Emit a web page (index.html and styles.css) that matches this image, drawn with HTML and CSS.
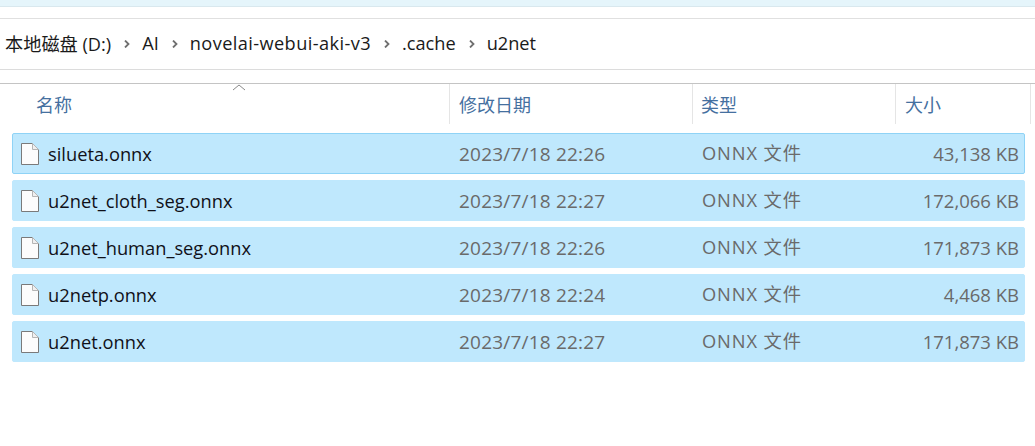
FILE: index.html
```html
<!DOCTYPE html>
<html lang="zh-CN">
<head>
<meta charset="utf-8">
<title>u2net</title>
<link rel="stylesheet" href="styles.css">
</head>
<body>
<svg class="defs" width="0" height="0" aria-hidden="true">
  <symbol id="file" viewBox="0 0 18 22">
    <path d="M0.5 0.5H11.5L17.5 6.5V21.5H0.5Z" fill="#fcfcfc" stroke="#7a7a7a"/>
    <path d="M11.5 0.5V6.5H17.5Z" fill="#f0f0f0" stroke="#b5b5b5"/>
  </symbol>
  <symbol id="chev" viewBox="0 0 6 8">
    <path d="M1 0.5L4.5 4L1 7.5" fill="none" stroke="#6f6f6f" stroke-width="1.8"/>
  </symbol>
</svg>
<div class="strip"></div>
<nav class="crumbs">
  <span>本地磁盘 (D:)</span><svg class="chev"><use href="#chev"/></svg>
  <span>AI</span><svg class="chev"><use href="#chev"/></svg>
  <span class="wide">novelai-webui-aki-v3</span><svg class="chev"><use href="#chev"/></svg>
  <span>.cache</span><svg class="chev"><use href="#chev"/></svg>
  <span>u2net</span>
</nav>
<div class="gap"></div>
<header class="head">
  <div class="col col-name">名称<svg class="sort" viewBox="0 0 14 7"><path d="M1 6L7 1L13 6" fill="none" stroke="#8a8a8a"/></svg></div>
  <div class="col col-date">修改日期</div>
  <div class="col col-type">类型</div>
  <div class="col col-size">大小</div>
</header>
<main class="list">
  <div class="row focus"><svg class="file"><use href="#file"/></svg><span class="name">silueta.onnx</span><span class="date">2023/7/18 22:26</span><span class="type">ONNX 文件</span><span class="size">43,138 KB</span></div>
  <div class="row"><svg class="file"><use href="#file"/></svg><span class="name">u2net_cloth_seg.onnx</span><span class="date">2023/7/18 22:27</span><span class="type">ONNX 文件</span><span class="size">172,066 KB</span></div>
  <div class="row"><svg class="file"><use href="#file"/></svg><span class="name">u2net_human_seg.onnx</span><span class="date">2023/7/18 22:26</span><span class="type">ONNX 文件</span><span class="size">171,873 KB</span></div>
  <div class="row"><svg class="file"><use href="#file"/></svg><span class="name">u2netp.onnx</span><span class="date">2023/7/18 22:24</span><span class="type">ONNX 文件</span><span class="size">4,468 KB</span></div>
  <div class="row"><svg class="file"><use href="#file"/></svg><span class="name">u2net.onnx</span><span class="date">2023/7/18 22:27</span><span class="type">ONNX 文件</span><span class="size">171,873 KB</span></div>
</main>
</body>
</html>
```

FILE: styles.css
```css
* { box-sizing: border-box; }
html, body { margin: 0; padding: 0; }
body {
  width: 1035px;
  height: 446px;
  overflow: hidden;
  background: #fff;
  font-family: "Open Sans", "Noto Sans CJK SC", sans-serif;
  font-size: 18px;
  color: #1a1a1a;
}
.defs { position: absolute; }
.strip {
  height: 7px;
  margin-bottom: 11px;
  background: #e5f5fb;
  border-bottom: 1px solid #d9e8ee;
}
.crumbs {
  height: 52px;
  display: flex;
  align-items: center;
  padding: 0 0 3px 5px;
  border-top: 1px solid #e0e0e0;
  border-bottom: 1px solid #dcdcdc;
  white-space: nowrap;
  font-size: 18.2px;
}
.wide { letter-spacing: 0.4px; }
.chev { width: 6px; height: 8px; margin: 3px 12px 0 13px; }
.gap { height: 13px; }
.head {
  height: 41px;
  display: flex;
  border-top: 1px solid #c4c4c4;
  color: #45709f;
  font-size: 18px;
}
.col {
  position: relative;
  padding-top: 9px;
  border-right: 1px solid #e5e5e5;
  line-height: 24px;
}
.col-name { width: 450px; padding-left: 36px; }
.col-date { width: 243px; padding-left: 9px; }
.col-type { width: 203px; padding-left: 8px; }
.col-size { width: 135px; padding-left: 9px; }
.sort { position: absolute; left: 232px; top: 0; width: 14px; height: 7px; }
.list {
  display: flex;
  flex-direction: column;
  gap: 6px;
  margin: 9px 10px 0 12px;
}
.row {
  height: 41px;
  display: flex;
  align-items: center;
  background: #bfe8fd;
  border: 1px solid #bfe8fd;
  border-radius: 2px;
  color: #6a6a6a;
}
.focus { border-color: #8fd3f6; }
.file { width: 18px; height: 22px; margin-left: 8px; flex: none; }
.name { width: 420px; padding-left: 9px; color: #101018; font-size: 18.3px; }
.date { width: 243px; font-size: 19px; letter-spacing: 0.2px; }
.type { width: 210px; font-size: 18.3px; letter-spacing: 0.9px; line-height: 24px; padding-bottom: 1px; }
.size { width: 107px; text-align: right; font-size: 18.5px; }
```
